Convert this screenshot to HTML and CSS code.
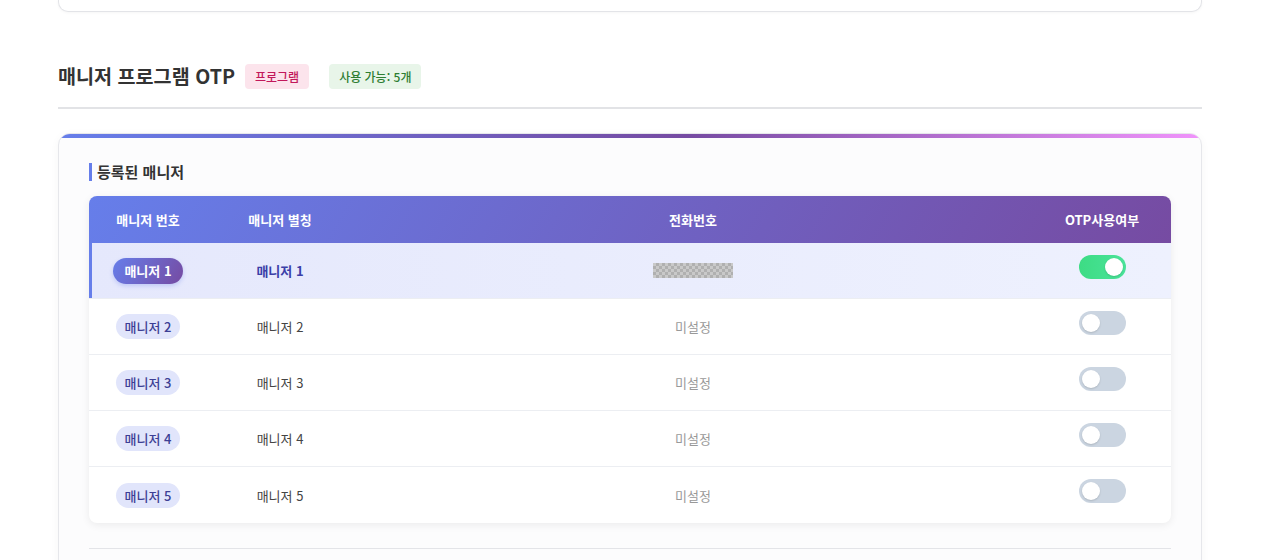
FILE: index.html
```html
<!DOCTYPE html>
<html lang="ko">
<head>
<meta charset="utf-8">
<title>매니저 프로그램 OTP</title>
<link rel="stylesheet" href="styles.css">
</head>
<body>
<div class="page">
  <div class="prev-card"></div>

  <div class="section-head">
    <h2 class="section-title">매니저 프로그램 OTP</h2>
    <span class="badge badge-pink">프로그램</span>
    <span class="badge badge-green">사용 가능: 5개</span>
  </div>

  <div class="card">
    <h3 class="sub-title">등록된 매니저</h3>
    <table class="mgr-table">
      <thead>
        <tr>
          <th class="c1">매니저 번호</th>
          <th class="c2">매니저 별칭</th>
          <th class="c3">전화번호</th>
          <th class="c4">OTP사용여부</th>
        </tr>
      </thead>
      <tbody>
        <tr class="active">
          <td class="c1"><span class="pill pill-active">매니저 1</span></td>
          <td class="c2 name">매니저 1</td>
          <td class="c3"><span class="masked"></span></td>
          <td class="c4"><span class="toggle on"><span class="knob"></span></span></td>
        </tr>
        <tr>
          <td class="c1"><span class="pill">매니저 2</span></td>
          <td class="c2 name">매니저 2</td>
          <td class="c3 unset">미설정</td>
          <td class="c4"><span class="toggle"><span class="knob"></span></span></td>
        </tr>
        <tr>
          <td class="c1"><span class="pill">매니저 3</span></td>
          <td class="c2 name">매니저 3</td>
          <td class="c3 unset">미설정</td>
          <td class="c4"><span class="toggle"><span class="knob"></span></span></td>
        </tr>
        <tr>
          <td class="c1"><span class="pill">매니저 4</span></td>
          <td class="c2 name">매니저 4</td>
          <td class="c3 unset">미설정</td>
          <td class="c4"><span class="toggle"><span class="knob"></span></span></td>
        </tr>
        <tr>
          <td class="c1"><span class="pill">매니저 5</span></td>
          <td class="c2 name">매니저 5</td>
          <td class="c3 unset">미설정</td>
          <td class="c4"><span class="toggle"><span class="knob"></span></span></td>
        </tr>
      </tbody>
    </table>
    <div class="divider"></div>
  </div>
</div>
</body>
</html>
```

FILE: styles.css
```css
* { box-sizing: border-box; }

html, body {
  margin: 0;
  padding: 0;
  background: #ffffff;
  font-family: "Noto Sans CJK KR", "Noto Sans", sans-serif;
  color: #333;
  height: 560px;
  overflow: hidden;
}

.page {
  width: 1144px;
  margin-left: 58px;
}

.prev-card {
  height: 13px;
  margin-top: -1px;
  border: 1px solid #e3e4e8;
  border-top: none;
  border-radius: 0 0 10px 10px;
  background: #fff;
  box-shadow: 0 1px 3px rgba(0,0,0,0.04);
}

.section-head {
  display: flex;
  align-items: center;
  margin-top: 51px;
  padding-bottom: 18px;
  border-bottom: 2px solid #e2e3e6;
  box-sizing: content-box;
  height: 26px;
}

.section-title {
  margin: 0 10px 0 0;
  font-size: 19.6px;
  font-weight: 700;
  color: #333;
  line-height: 26px;
}

.badge {
  display: inline-flex;
  align-items: center;
  height: 25px;
  padding: 0 10px;
  border-radius: 4px;
  font-size: 12px;
  font-weight: 500;
}

.badge-pink {
  background: #fce4ec;
  color: #c2185b;
  margin-right: 20px;
}

.badge-green {
  background: #e8f5e9;
  color: #2e7d32;
}

.card {
  position: relative;
  margin-top: 24px;
  background: #fcfcfd;
  border: 1px solid #e6e7eb;
  border-radius: 12px;
  padding: 29px 30px 40px 30px;
  overflow: hidden;
  box-shadow: 0 2px 10px rgba(0,0,0,0.04);
}

.card::before {
  content: "";
  position: absolute;
  left: 0;
  right: 0;
  top: 0;
  height: 4px;
  background: linear-gradient(90deg, #667eea 0%, #764ba2 55%, #f093fb 100%);
}

.sub-title {
  margin: 0 0 15px 0;
  font-size: 15px;
  font-weight: 700;
  color: #333;
  border-left: 3px solid #667eea;
  padding-left: 5px;
  line-height: 18px;
}

.mgr-table {
  width: 1082px;
  border-collapse: separate;
  border-spacing: 0;
  border-radius: 8px;
  overflow: hidden;
  background: #fff;
  box-shadow: 0 2px 8px rgba(0,0,0,0.07);
  table-layout: fixed;
}

.mgr-table thead tr {
  background: linear-gradient(120deg, #667eea 0%, #764ba2 100%);
}

.mgr-table th {
  height: 47px;
  padding: 0;
  font-size: 13px;
  font-weight: 700;
  color: #fff;
  text-align: center;
}

.c1 { width: 118px; }
.c2 { width: 146px; }
.c3 { width: 680px; }
.c4 { width: 138px; }

.mgr-table td {
  height: 56px;
  padding: 0;
  text-align: center;
  font-size: 13px;
  color: #444;
  border-bottom: 1px solid #eceef2;
  vertical-align: middle;
}

.mgr-table tbody tr:last-child td {
  border-bottom: none;
}

.mgr-table tr.active {
  background: linear-gradient(90deg, #e5e8fc 0%, #eef1fe 100%);
}

.mgr-table tr.active td.c1 {
  box-shadow: inset 3px 0 0 #667eea;
}

.mgr-table tr.active td.name {
  color: #3b3fa8;
  font-weight: 700;
}

.unset { color: #999 !important; }

.pill {
  display: inline-flex;
  align-items: center;
  justify-content: center;
  height: 25px;
  padding: 0 9px;
  border-radius: 13px;
  background: #e1e5fb;
  color: #3d3f95;
  font-size: 13px;
  font-weight: 500;
}

.pill-active {
  height: 26px;
  padding: 0 11px;
  background: linear-gradient(120deg, #667eea 0%, #764ba2 100%);
  color: #fff;
  font-weight: 700;
  box-shadow: 0 2px 4px rgba(102,126,234,0.3);
}

.masked {
  display: inline-block;
  width: 80px;
  height: 15px;
  vertical-align: middle;
  margin-top: -3px;
  background-color: #c9c9c9;
  background-image:
    linear-gradient(45deg, #b0b0b0 25%, transparent 25%, transparent 75%, #b0b0b0 75%),
    linear-gradient(45deg, #b0b0b0 25%, transparent 25%, transparent 75%, #b0b0b0 75%);
  background-size: 6px 6px;
  background-position: 0 0, 3px 3px;
}

.toggle {
  position: relative;
  display: block;
  width: 47px;
  height: 24px;
  border-radius: 12px;
  background: #cbd5e1;
  margin: -8px auto 0;
}

.toggle.on {
  background: linear-gradient(90deg, #3ddc84 0%, #4ae39a 100%);
}

.knob {
  position: absolute;
  top: 3px;
  left: 3px;
  width: 18px;
  height: 18px;
  border-radius: 50%;
  background: #fff;
  box-shadow: 0 1px 2px rgba(0,0,0,0.15);
}

.toggle.on .knob {
  left: auto;
  right: 3px;
}

.divider {
  margin-top: 25px;
  height: 1px;
  background: #e3e4e8;
}
```
